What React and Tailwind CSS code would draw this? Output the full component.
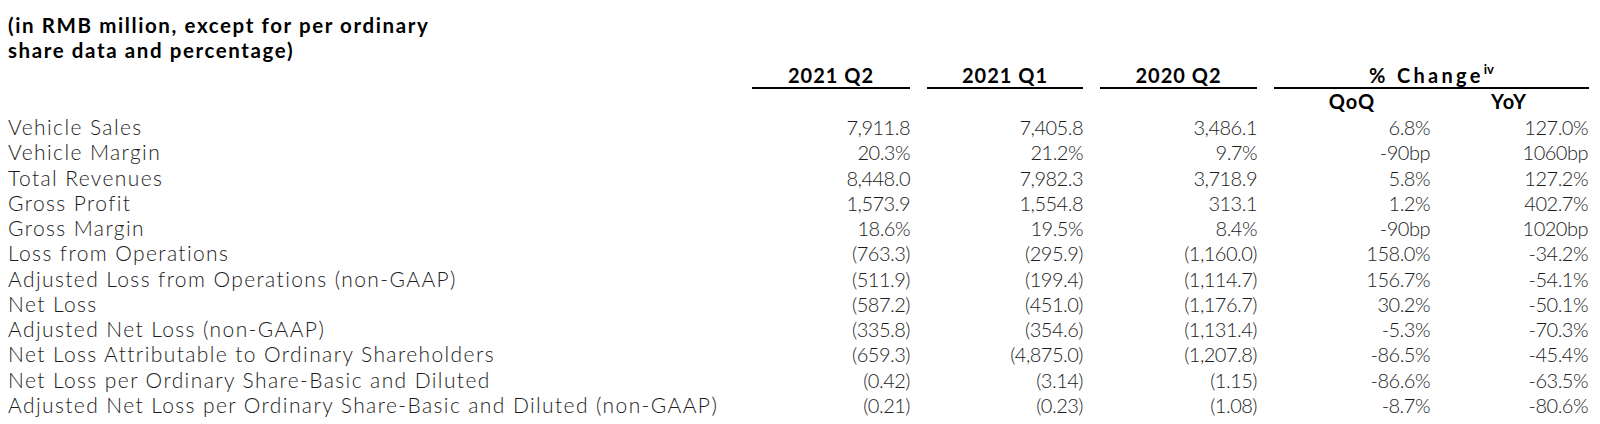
import React from 'react'

const rows = [
  ['Vehicle Sales', '7,911.8', '7,405.8', '3,486.1', '6.8%', '127.0%'],
  ['Vehicle Margin', '20.3%', '21.2%', '9.7%', '-90bp', '1060bp'],
  ['Total Revenues', '8,448.0', '7,982.3', '3,718.9', '5.8%', '127.2%'],
  ['Gross Profit', '1,573.9', '1,554.8', '313.1', '1.2%', '402.7%'],
  ['Gross Margin', '18.6%', '19.5%', '8.4%', '-90bp', '1020bp'],
  ['Loss from Operations', '(763.3)', '(295.9)', '(1,160.0)', '158.0%', '-34.2%'],
  ['Adjusted Loss from Operations (non-GAAP)', '(511.9)', '(199.4)', '(1,114.7)', '156.7%', '-54.1%'],
  ['Net Loss', '(587.2)', '(451.0)', '(1,176.7)', '30.2%', '-50.1%'],
  ['Adjusted Net Loss (non-GAAP)', '(335.8)', '(354.6)', '(1,131.4)', '-5.3%', '-70.3%'],
  ['Net Loss Attributable to Ordinary Shareholders', '(659.3)', '(4,875.0)', '(1,207.8)', '-86.5%', '-45.4%'],
  ['Net Loss per Ordinary Share-Basic and Diluted', '(0.42)', '(3.14)', '(1.15)', '-86.6%', '-63.5%'],
  ['Adjusted Net Loss per Ordinary Share-Basic and Diluted (non-GAAP)', '(0.21)', '(0.23)', '(1.08)', '-8.7%', '-80.6%'],
]

const cols = 'grid grid-cols-[727px_175px_173px_174px_173px_158px]'

export default function App() {
  return (
    <div className="w-[1600px] h-[424px] overflow-hidden bg-white pl-2 pt-[13px] font-['Lato',sans-serif] text-[#1c1c1c]">
      {/* title */}
      <div className="text-[20.5px] leading-[25px] font-bold tracking-[1.6px] text-black">
        <div>(in RMB million, except for per ordinary</div>
        <div>share data and percentage)</div>
      </div>

      {/* column headers */}
      <div className={`${cols} text-[20px] leading-[24px] font-bold tracking-[1px] text-black`}>
        <div />
        <div className="ml-[17px] border-b-2 border-black text-center">2021 Q2</div>
        <div className="ml-[17px] border-b-2 border-black text-center">2021 Q1</div>
        <div className="ml-[17px] border-b-2 border-black text-center">2020 Q2</div>
        <div className="col-span-2 ml-[17px] mr-[-1px] border-b-2 border-black text-center">
          <span className="tracking-[3.3px]">% Change</span>
          <sup className="text-[13px] tracking-normal -top-[9px]">iv</sup>
        </div>
      </div>
      <div className={`${cols} text-[20px] leading-[25px] font-bold tracking-[1px] text-black`}>
        <div />
        <div />
        <div />
        <div />
        <div className="ml-[17px] text-center">QoQ</div>
        <div className="text-center">YoY</div>
      </div>

      {/* data rows */}
      {rows.map((r) => (
        <div key={r[0]} className={`${cols} h-[25.27px] items-baseline leading-[25.27px] font-light`}>
          <div className="text-[21px] tracking-[1.4px] whitespace-nowrap">{r[0]}</div>
          {r.slice(1).map((v, i) => (
            <div key={i} className="text-[20px] text-right tracking-[-0.5px]">
              {v}
            </div>
          ))}
        </div>
      ))}
    </div>
  )
}
